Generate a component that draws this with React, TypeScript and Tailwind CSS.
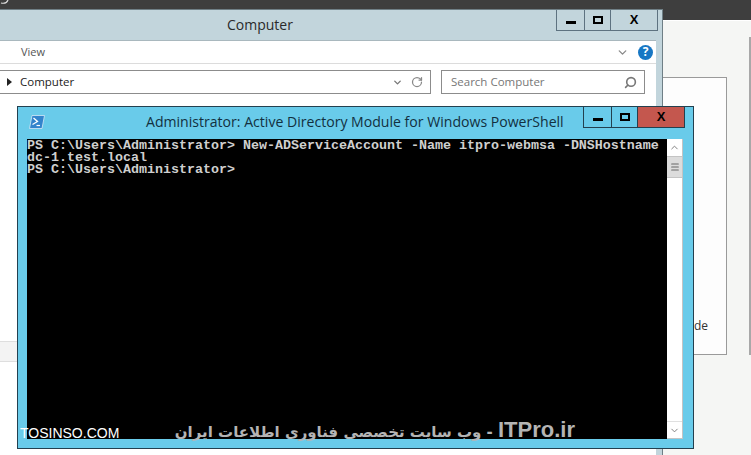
import { ChevronDown, ChevronUp, Menu, RotateCw, Search } from "lucide-react";

function WindowButtons({ closeColor, borderColor }: { closeColor: string; borderColor: string }) {
  return (
    <div className={`flex h-[21px] border-b border-l border-r ${borderColor}`}>
      <div className={`flex w-[28px] items-end justify-center border-r pb-[6px] ${borderColor}`}>
        <div className="h-[3px] w-[10px] bg-black" />
      </div>
      <div className={`flex w-[26px] items-start justify-center border-r pt-[6px] ${borderColor}`}>
        <div className="h-[8px] w-[10px] border-2 border-black" />
      </div>
      <div className={`flex w-[46px] items-start justify-center pt-[3px] font-['Liberation_Sans',sans-serif] text-[13px] leading-[13px] font-bold text-black ${closeColor}`}>
        X
      </div>
    </div>
  );
}

function PsIcon() {
  return (
    <svg width="16" height="14" viewBox="0 0 16 14">
      <path d="M3 0.5h12.5l-2.5 13H0.5z" fill="#3384cc" stroke="#d6e8f6" strokeWidth="0.8" />
      <path d="M4.5 3l4 3.5-5 3" fill="none" stroke="#fff" strokeWidth="1.3" />
      <path d="M7.5 10.5h3.5" stroke="#fff" strokeWidth="1.2" />
    </svg>
  );
}

function ExplorerWindow() {
  return (
    <div className="absolute top-[9px] left-0 flex h-[446px] w-[663px] flex-col border-t border-r border-[#6f7f86] bg-[#c2d5dc] pr-[6px] font-['Open_Sans',sans-serif]">
      <div className="flex h-[30px] shrink-0">
        <div className="flex-1 pt-[4px] pl-[227px] text-[14px] leading-[22px] text-[#2a2a2a]">Computer</div>
        <div className="-mr-[2px]">
          <WindowButtons closeColor="" borderColor="border-[#5d7280]" />
        </div>
      </div>

      <div className="flex min-h-0 flex-1 flex-col bg-white">
        <div className="flex h-[24px] shrink-0 items-center border-t border-b border-t-[#a9b8be] border-b-[#dcdcdc] pr-[3px] pl-[21px] text-[11px] text-[#555]">
          <span className="flex-1">View</span>
          <ChevronDown size={13} className="mr-[9px] text-[#8a8a8a]" strokeWidth={2.5} />
          <div className="flex h-[15px] w-[15px] items-center justify-center rounded-full bg-[#1777c4] text-[12px] leading-none font-bold text-white">
            ?
          </div>
        </div>

        <div className="mt-[6px] flex h-[24px] shrink-0 gap-[10px] pr-[11px]">
          <div className="flex flex-1 items-center border-t border-r border-b border-[#8c8c8c] pl-[7px] text-[11.5px] text-[#222]">
            <span className="mr-[8px] h-0 w-0 border-y-[4px] border-l-[5px] border-y-transparent border-l-[#222]" />
            <span className="flex-1">Computer</span>
            <ChevronDown size={11} className="mr-[8px] text-[#777]" strokeWidth={3} />
            <RotateCw size={12} className="mr-[7px] text-[#888]" strokeWidth={2.5} />
          </div>
          <div className="flex w-[204px] items-center border border-[#8c8c8c] pr-[7px] pl-[9px] text-[11.5px] text-[#777]">
            <span className="flex-1">Search Computer</span>
            <Search size={13} className="-scale-x-100 text-[#777]" strokeWidth={3} />
          </div>
        </div>

        <div className="mt-[247px] h-[21px] w-full shrink-0 border-y border-[#dedede] bg-[#f3f3f3]" />
        <div className="flex-1 bg-white" />
      </div>
    </div>
  );
}

function ConsoleWindow() {
  return (
    <div className="absolute top-[106px] left-[17px] flex h-[343px] w-[677px] flex-col border border-[#23404f] bg-[#69cbea] pr-[10px] pb-[9px] pl-[9px]">
      <div className="flex h-[32px] shrink-0">
        <div className="pt-[8px] pl-[2px]">
          <PsIcon />
        </div>
        <div className="flex-1 pt-[4px] pl-[101px] font-['Open_Sans',sans-serif] text-[14.08px] leading-[22px] whitespace-nowrap text-[#12303f]">
          Administrator: Active Directory Module for Windows PowerShell
        </div>
        <div className="-mr-[2px]">
          <WindowButtons closeColor="bg-[#c4574e]" borderColor="border-[#23404f]" />
        </div>
      </div>

      <div className="flex min-h-0 flex-1">
        <div className="flex-1 bg-black pt-[1px] font-['Liberation_Mono',monospace] text-[13.33px] leading-[12px] font-bold whitespace-pre text-[#cfcfcf]">
          <div>{"PS C:\\Users\\Administrator> New-ADServiceAccount -Name itpro-webmsa -DNSHostname"}</div>
          <div>dc-1.test.local</div>
          <div>{"PS C:\\Users\\Administrator>"}</div>
        </div>
        <div className="flex w-[16px] flex-col border-r border-b border-[#c4c4c4] bg-white">
          <div className="flex h-[17px] items-center justify-center">
            <ChevronUp size={11} className="text-[#777]" />
          </div>
          <div className="flex h-[22px] items-center justify-center border-y border-[#c4c4c4] bg-[#dcdcdc]">
            <Menu size={10} className="text-[#666]" strokeWidth={2.5} />
          </div>
          <div className="flex-1" />
          <div className="flex h-[17px] items-center justify-center border-t border-[#e0e0e0]">
            <ChevronDown size={11} className="text-[#777]" />
          </div>
        </div>
      </div>
    </div>
  );
}

export default function App() {
  return (
    <div className="relative h-[455px] w-[751px] overflow-hidden bg-[#f5f6f4]">
      <div className="h-[20px] border-b border-[#3e3e3e] bg-[#3e3e3e]" />
      <div className="h-[1px] bg-white" />
      <div className="absolute top-[37px] left-[749px] h-[318px] w-[2px] bg-[#a8a8a8]" />
      <div className="absolute top-[77px] left-[663px] h-[278px] w-[64px] border-t border-r border-b border-[#9a9a9a] bg-[#fdfdfd]">
        <span className="absolute top-[241px] left-[31px] font-['Open_Sans',sans-serif] text-[12px] leading-[14px] text-[#333]">de</span>
      </div>
      <svg className="absolute top-0 left-0" width="12" height="4" viewBox="0 0 12 4">
        <path d="M1 3c3 0.6 6 0 7-3" fill="none" stroke="#ddd" strokeWidth="1.2" />
      </svg>
      <ExplorerWindow />
      <ConsoleWindow />
      <div className="absolute top-[426px] left-[20px] font-['Liberation_Sans',sans-serif] text-[14px] leading-[14px] text-white">
        TOSINSO.COM
      </div>
      <div
        dir="rtl"
        className="absolute top-[417px] left-[170px] w-[405px] whitespace-nowrap font-['DejaVu_Sans',sans-serif] text-[15px] leading-[26px] font-bold text-[#b4b4b4]"
      >
        <span dir="ltr" className="font-['Liberation_Sans',sans-serif] text-[22px]">ITPro.ir</span> - وب سایت تخصصی فناوری اطلاعات ایران
      </div>
    </div>
  );
}
